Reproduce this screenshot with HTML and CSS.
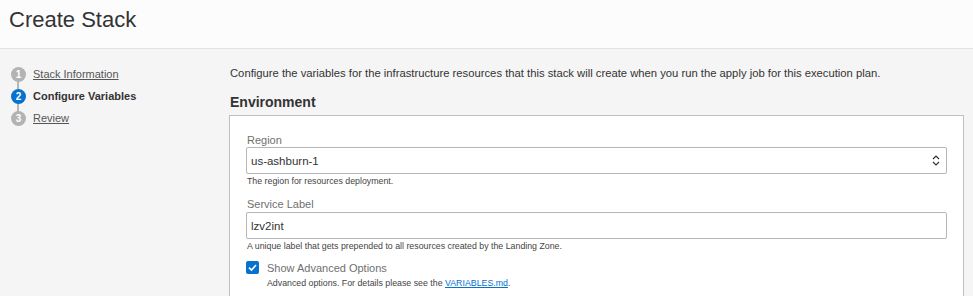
FILE: index.html
```html
<!DOCTYPE html>
<html lang="en">
<head>
  <meta charset="UTF-8">
  <title>Create Stack</title>
  <link rel="stylesheet" href="styles.css">
</head>
<body>
  <!-- page title -->
  <header class="page-header">
    <h1>Create Stack</h1>
  </header>

  <div class="layout">
    <!-- wizard steps -->
    <nav class="steps">
      <ul>
        <li class="step done"><span class="num">1</span><a href="#">Stack Information</a></li>
        <li class="step current"><span class="num">2</span><span class="name">Configure Variables</span></li>
        <li class="step"><span class="num">3</span><a href="#">Review</a></li>
      </ul>
    </nav>

    <main class="content">
      <p class="intro">Configure the variables for the infrastructure resources that this stack will create when you run the apply job for this execution plan.</p>
      <h2>Environment</h2>

      <section class="panel">
        <div class="field">
          <label>Region</label>
          <div class="select">
            <span>us-ashburn-1</span>
            <svg width="8" height="11" viewBox="0 0 8 11"><path d="M1 4 L4 1 L7 4 M1 7 L4 10 L7 7" fill="none" stroke="#333" stroke-width="1.2"/></svg>
          </div>
          <div class="help">The region for resources deployment.</div>
        </div>

        <div class="field">
          <label>Service Label</label>
          <div class="input">lzv2int</div>
          <div class="help">A unique label that gets prepended to all resources created by the Landing Zone.</div>
        </div>

        <div class="check">
          <span class="box"><svg width="13" height="13" viewBox="0 0 13 13"><path d="M3 6.6 L5.5 9 L10 4" fill="none" stroke="#fff" stroke-width="1.6"/></svg></span>
          <div>
            <div class="check-label">Show Advanced Options</div>
            <div class="help">Advanced options. For details please see the <a href="#">VARIABLES.md</a>.</div>
          </div>
        </div>
      </section>
    </main>
  </div>
</body>
</html>
```

FILE: styles.css
```css
* {
  margin: 0;
  padding: 0;
  box-sizing: border-box;
}
body {
  font-family: 'Liberation Sans', Arial, sans-serif;
  background: #f5f5f5;
  color: #333;
  height: 296px;
  overflow: hidden;
}
a {
  color: inherit;
}

/* header */
.page-header {
  background: #fcfcfc;
  border-bottom: 1px solid #e3e3e3;
  height: 49px;
  padding: 6px 9px 0;
}
.page-header h1 {
  font-size: 22px;
  font-weight: normal;
  line-height: 27px;
  color: #333;
}

.layout {
  display: flex;
}

/* steps */
.steps {
  width: 229px;
  padding-top: 14px;
}
.steps ul {
  list-style: none;
}
.step {
  position: relative;
  display: flex;
  align-items: center;
  height: 22px;
  padding-left: 11px;
  font-size: 11px;
  color: #555;
}
.step + .step::before {
  content: '';
  position: absolute;
  left: 17px;
  top: -8px;
  width: 2px;
  height: 16px;
  background: #b5b5b5;
}
.num {
  position: relative;
  z-index: 1;
  width: 15px;
  height: 15px;
  border-radius: 50%;
  background: #b3b3b3;
  color: #fff;
  font-size: 10px;
  font-weight: bold;
  line-height: 15px;
  text-align: center;
  margin-right: 7px;
}
.step.current .num {
  background: #0572ce;
}
.step.current .name {
  font-weight: bold;
  color: #333;
}

/* main content */
.content {
  flex: 1;
  padding: 17px 9px 0 0;
}
.intro {
  font-size: 11.25px;
  line-height: 14px;
  padding-left: 1px;
}
.content h2 {
  font-size: 14px;
  font-weight: bold;
  line-height: 18px;
  margin: 13px 0 4px 1px;
}
.panel {
  background: #fff;
  border: 1px solid #bcc0c5;
  padding: 17px 16px 20px 16px;
}
.field + .field {
  margin-top: 10px;
}
.field label {
  display: block;
  font-size: 11px;
  line-height: 14px;
  color: #707070;
  padding-left: 1px;
}
.select,
.input {
  height: 27px;
  border: 1px solid #b3b7bc;
  border-radius: 2px;
  font-size: 11.5px;
  color: #333;
  padding: 0 4px;
  display: flex;
  align-items: center;
}
.select {
  justify-content: space-between;
  padding-right: 6px;
}
.field label + .input {
  margin-top: 1px;
}
.help {
  font-size: 8.8px;
  line-height: 12px;
  color: #444;
  padding-left: 1px;
  margin-top: 1px;
}
.help a {
  color: #0572ce;
}

/* checkbox */
.check {
  display: flex;
  margin-top: 9px;
}
.box {
  width: 13px;
  height: 13px;
  border-radius: 2px;
  background: #0572ce;
  margin-right: 8px;
  display: flex;
}
.check-label {
  font-size: 11px;
  line-height: 14px;
  color: #707070;
}
.check .help {
  padding-left: 0;
  margin-top: 2px;
}
```
